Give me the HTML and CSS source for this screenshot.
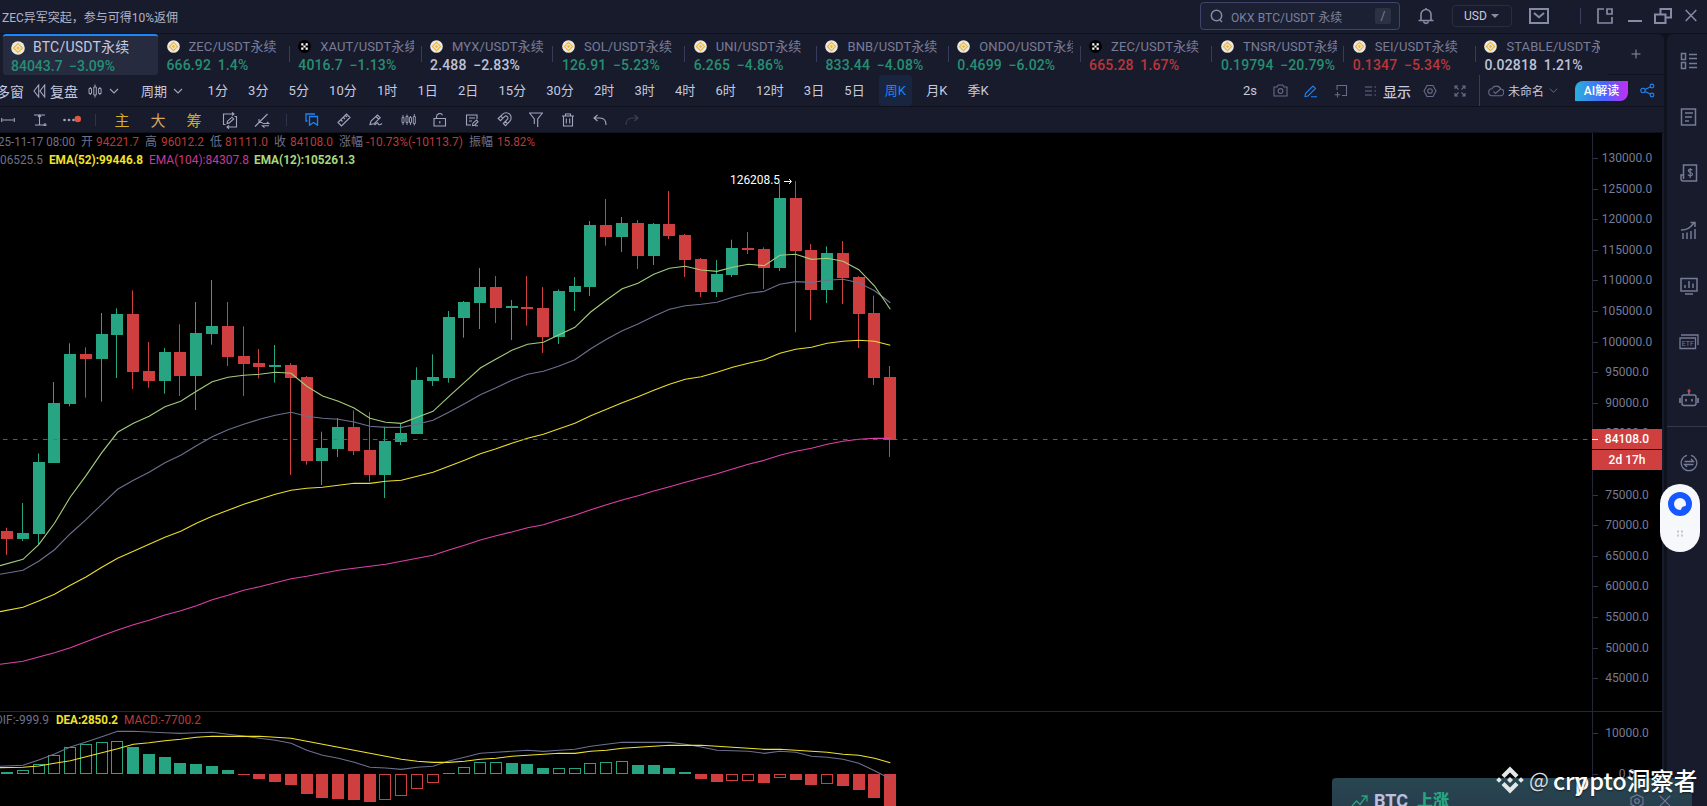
FILE: index.html
```html
<!DOCTYPE html>
<html lang="zh-CN">
<head>
<meta charset="utf-8">
<title>BTC/USDT永续</title>
<link rel="stylesheet" href="styles.css">
</head>
<body>
<svg class="defs" width="0" height="0">
  <symbol id="bn" viewBox="0 0 14 14"><circle cx="7" cy="7" r="6.8" fill="#ece9e4"/><path d="M7 2.600L11.400 7 7 11.400 2.600 7z" fill="none" stroke="#edb83a" stroke-width="1.300"/><path d="M7 5.200L8.800 7 7 8.800 5.200 7z" fill="#edb83a"/></symbol>
  <symbol id="okx" viewBox="0 0 14 14"><circle cx="7" cy="7" r="7" fill="#000"/><path d="M3.500 3.500h2.300v2.300H3.500zM8.200 3.500h2.300v2.300H8.200zM5.850 5.850h2.300v2.300h-2.300zM3.500 8.200h2.300v2.300H3.500zM8.200 8.200h2.300v2.300H8.200z" fill="#fff"/></symbol>
  <symbol id="chev" viewBox="0 0 10 10"><path d="M1 3l4 4 4-4"/></symbol>
</svg>
<div class="app">
  <header class="titlebar">
    <div class="notice">ZEC异军突起，参与可得10%返佣</div>
    <div class="search">
      <svg class="ic" width="14" height="14" viewBox="0 0 14 14"><circle cx="6.500" cy="6.500" r="5.200" stroke-width="1.500"/><path d="M10 11l2 2" stroke-width="1.500"/></svg>
      <span>OKX BTC/USDT 永续</span><kbd>/</kbd>
    </div>
    <svg class="ic bell" width="18" height="18" viewBox="0 0 18 18"><path d="M4 13V7.500a5 5 0 0 1 10 0V13M1.500 13.500h15M6.500 14.500a2.600 2.600 0 0 0 5 0M9 2.500V1" stroke-width="1.600"/></svg>
    <div class="usd">USD<i></i></div>
    <svg class="ic mail" width="20" height="16" viewBox="0 0 20 16"><path d="M1 1h18v14H1zM5 5l5 4.200 5-4.200" stroke-width="2"/></svg>
    <i class="tsep"></i>
    <svg class="ic t1" width="17" height="16" viewBox="0 0 17 16"><path d="M7 1H1v14h14V9M10 1h5v5h-5z" stroke-width="1.700"/></svg>
    <svg class="ic t2" width="14" height="16" viewBox="0 0 14 16"><path d="M0 13h14" stroke-width="2"/></svg>
    <svg class="ic t3" width="18" height="16" viewBox="0 0 18 16"><path d="M1 6.500h10.500V15H1zM6.500 6V1H17v8.500h-5" stroke-width="2"/></svg>
    <svg class="ic t4" width="12" height="13" viewBox="0 0 12 13"><path d="M.7 1l10.600 11M11.300 1L.7 12" stroke-width="1.500"/></svg>
  </header>
  <div class="body">
    <main class="main">
      <nav class="tabs">
        <div class="tab on"><div class="nm"><svg><use href="#bn"/></svg><span>BTC/USDT永续</span></div><b class="g">84043.7 −3.09%</b></div>
        <div class="tab"><div class="nm"><svg><use href="#bn"/></svg><span>ZEC/USDT永续</span></div><b class="g">666.92 1.4%</b></div>
        <div class="tab"><div class="nm"><svg><use href="#okx"/></svg><span>XAUT/USDT永续</span></div><b class="g">4016.7 −1.13%</b></div>
        <div class="tab"><div class="nm"><svg><use href="#bn"/></svg><span>MYX/USDT永续</span></div><b class="w">2.488 −2.83%</b></div>
        <div class="tab"><div class="nm"><svg><use href="#bn"/></svg><span>SOL/USDT永续</span></div><b class="g">126.91 −5.23%</b></div>
        <div class="tab"><div class="nm"><svg><use href="#bn"/></svg><span>UNI/USDT永续</span></div><b class="g">6.265 −4.86%</b></div>
        <div class="tab"><div class="nm"><svg><use href="#bn"/></svg><span>BNB/USDT永续</span></div><b class="g">833.44 −4.08%</b></div>
        <div class="tab"><div class="nm"><svg><use href="#bn"/></svg><span>ONDO/USDT永续</span></div><b class="g">0.4699 −6.02%</b></div>
        <div class="tab"><div class="nm"><svg><use href="#okx"/></svg><span>ZEC/USDT永续</span></div><b class="r">665.28 1.67%</b></div>
        <div class="tab"><div class="nm"><svg><use href="#bn"/></svg><span>TNSR/USDT永续</span></div><b class="g">0.19794 −20.79%</b></div>
        <div class="tab"><div class="nm"><svg><use href="#bn"/></svg><span>SEI/USDT永续</span></div><b class="r">0.1347 −5.34%</b></div>
        <div class="tab last"><div class="nm"><svg><use href="#bn"/></svg><span>STABLE/USDT永续</span></div><b class="w">0.02818 1.21%</b></div>
        <div class="add"><svg class="ic" width="10" height="10" viewBox="0 0 10 10"><path d="M5 .5v9M.5 5h9" stroke-width="1"/></svg></div>
      </nav>
      <div class="periods">
        <div class="pleft">
          <span class="big">多窗</span>
          <svg class="ic lt rw" width="13" height="14" viewBox="0 0 13 14"><path d="M5.700 1v12L1 7zM11.700 1v12L7 7z" stroke-width="1.100"/></svg>
          <span class="big">复盘</span>
          <svg class="ic lt cd" width="14" height="14" viewBox="0 0 14 14"><path d="M1 4.500h2.500v5H1zM5.800 3h2.500v8H5.800zM10.600 4.500h2.500v5h-2.500zM2.300 3v1.500M2.300 9.500V11M7 .5V3M7 11v2.500M11.900 3v1.500M11.900 9.500V11" stroke-width="1"/></svg>
          <svg class="ic lt cv" width="10" height="10"><use href="#chev"/></svg>
          <span class="zq">周期</span>
          <svg class="ic lt cv2" width="10" height="10"><use href="#chev"/></svg>
        </div>
        <ul class="plist"><li>1分</li><li>3分</li><li>5分</li><li>10分</li><li>1时</li><li>1日</li><li>2日</li><li>15分</li><li>30分</li><li>2时</li><li>3时</li><li>4时</li><li>6时</li><li>12时</li><li>3日</li><li>5日</li><li class="cur">周K</li><li>月K</li><li>季K</li></ul>
        <div class="pright">
          <span class="cell">2s</span>
          <span class="cell"><svg class="ic" width="15" height="13" viewBox="0 0 15 13"><path d="M1 3h3l1.200-2h4.600L11 3h3v9H1z"/><circle cx="7.500" cy="7" r="2.400"/></svg></span>
          <span class="cell"><svg class="ic blue" width="14" height="14" viewBox="0 0 14 14"><path d="M1.500 9.500L9 2l2.500 2.500L4 12l-3 .5zM7 12.800h6"/></svg></span>
          <span class="cell"><svg class="ic" width="14" height="14" viewBox="0 0 14 14"><path d="M3 6V1.500h9.500v10H8M3.500 8v5.500M.7 10.800h5.600"/></svg></span>
          <span class="cell"><svg class="ic" width="12" height="12" viewBox="0 0 12 12"><path d="M0 2h7M0 6h7M0 10h7M9.500 2H11M9.500 6H11M9.500 10H11"/></svg></span>
          <span class="show">显示</span>
          <span class="cell"><svg class="ic" width="14" height="14" viewBox="0 0 14 14"><path d="M4 1.500h6L13 7l-3 5.500H4L1 7z"/><circle cx="7" cy="7" r="2.300"/></svg></span>
          <span class="cell"><svg class="ic" width="12" height="12" viewBox="0 0 12 12"><path d="M1 4V1h3M8 1h3v3M11 8v3H8M4 11H1V8M1.500 1.500l3 3M10.500 1.500l-3 3M10.500 10.500l-3-3M1.500 10.500l3-3"/></svg></span>
          <i class="psep"></i>
          <svg class="ic" width="16" height="12" viewBox="0 0 16 12"><path d="M4.500 10.800a3.500 3.500 0 0 1-.5-7A4.800 4.800 0 0 1 12.700 4a3.400 3.400 0 0 1-.7 6.800zM5.500 6.500L7.500 8.500l5-4.500"/></svg>
          <span class="unnamed">未命名</span>
          <svg class="ic" width="9" height="9"><use href="#chev"/></svg>
          <span class="ai">AI解读</span>
          <svg class="ic blue" width="15" height="15" viewBox="0 0 15 15"><circle cx="3" cy="7.500" r="2.200"/><circle cx="12" cy="3" r="1.900"/><circle cx="12" cy="12" r="1.900"/><path d="M5 6.500l5.200-2.600M5 8.500l5.200 2.600"/></svg>
        </div>
      </div>
      <div class="tools">
        <span class="c"><svg class="ic lt" width="14" height="10" viewBox="0 0 14 10"><path d="M1.500 5h11M.7 3v4M13.300 3v4"/></svg></span>
        <span class="c"><svg class="ic lt" width="14" height="12" viewBox="0 0 14 12"><path d="M1 1h11M2 11h9M6.500 1v10M5 3l1.500-2L8 3"/><circle cx="12" cy="10.700" r="1"/></svg></span>
        <span class="c"><svg width="20" height="10" viewBox="0 0 20 10"><g fill="#a4a8bd"><circle cx="2.500" cy="5" r="1.300"/><circle cx="7" cy="5" r="1.300"/><circle cx="11.500" cy="5" r="1.300"/></g><circle cx="15.800" cy="4" r="3.200" fill="#e2553e"/></svg></span>
        <i class="s s1"></i>
        <span class="c w k1">主</span><span class="c w k2">大</span><span class="c w k1">筹</span>
        <span class="c w"><svg class="ic lt" width="16" height="17" viewBox="0 0 16 17"><path d="M3.500 12.500H1.500V2H12M10 .5L12 2l-2 1.700M12.500 4.500h2V15H5M7 13.300L5 15l2 1.700M5 11.500l.5-2.300L10 5.200l1.700 1.700-4.500 4z"/></svg></span>
        <span class="c n"><svg class="ic lt" width="16" height="15" viewBox="0 0 16 15"><path d="M1 13.500L13.500 1M5 6v3.500h3.500M8.500 10.500h6.500L13 8.800M15 12.800H8.500l2 1.700"/></svg></span>
        <i class="s s2"></i>
        <span class="c"><svg class="ic blue" width="14" height="13" viewBox="0 0 14 13"><path d="M2.500 8H1V1h9M4.500 3.500h8v8.700l-4-2.700-4 2.700z" stroke-width="1.300"/></svg></span>
        <span class="c"><svg class="ic lt" width="14" height="14" viewBox="0 0 14 14"><path d="M1 9.500L9.500 1 13 4.500 4.500 13zM4 7l1.500 1.500M6.500 4.500L8 6M8.500 2.500L10 4"/></svg></span>
        <span class="c"><svg class="ic lt" width="14" height="14" viewBox="0 0 14 14"><path d="M1 11.500l1-3.500L8.500 2l2.700 2.700L5 10.800zM7 3.500l2.700 2.700M5.500 12c2-2 3-3 3.500-1.500s1.500 2 4 0"/></svg></span>
        <span class="c"><svg class="ic lt" width="15" height="14" viewBox="0 0 15 14"><path d="M1 4.500h2v5H1zM5 3.500h2v6H5zM8.500 4.500h2v5h-2zM12.300 3.500h2v7h-2zM2 2v2.500M2 9.500V12M6 1.500v2M6 9.500v2.500M9.500 3v1.500M9.500 9.500V12M13.300 1v2.500M13.300 10.500v2" stroke-width=".9"/></svg></span>
        <span class="c"><svg class="ic lt" width="14" height="14" viewBox="0 0 14 14"><path d="M1 5.500h11.500V13H1zM3.500 5V3.500a3.200 3.200 0 0 1 6-1.300M6.800 8v2.500"/></svg></span>
        <span class="c"><svg class="ic lt" width="14" height="14" viewBox="0 0 14 14"><path d="M6 12H1.500V2H12v4M4 5h6M4 8h3M7.500 12.500l.5-2.300L11.500 7 13 8.700l-3.500 3.500zM10 12.800h3"/></svg></span>
        <span class="c"><svg class="ic lt" width="15" height="15" viewBox="0 0 15 15"><path d="M1.200 6.500L5.500 2.300a5 5 0 0 1 7.200 7L8.500 13.700 6.300 11.500l4.200-4.300a2 2 0 0 0-2.800-2.800L3.500 8.700zM3.700 4.200l2.200 2.200M8.300 9.400l2.200 2.200"/></svg></span>
        <span class="c"><svg class="ic lt" width="16" height="15" viewBox="0 0 16 15"><path d="M1 1h14M1.500 1L6.300 7v5M14.500 1L9.700 7v8"/></svg></span>
        <span class="c"><svg class="ic lt" width="14" height="14" viewBox="0 0 14 14"><path d="M1 3h12M4.500 3V1h5v2M2.500 3v10h9V3M5.300 5.500v5M8.700 5.500v5"/></svg></span>
        <span class="c"><svg class="ic lt" width="14" height="12" viewBox="0 0 14 12"><path d="M4.500 1L1 4l3.500 3M1 4h6c4 0 6 3 6 7"/></svg></span>
        <span class="c"><svg class="ic dim" width="14" height="12" viewBox="0 0 14 12"><path d="M9.500 1L13 4 9.500 7M13 4H7C3 4 1 7 1 11"/></svg></span>
      </div>
      <svg class="chart" id="chart" width="1662" height="673" viewBox="0 133 1662 673"></svg>
    </main>
    <aside class="side">
      <svg class="ic" width="18" height="18" viewBox="0 0 18 18"><path d="M1.500 1.500h4v6h-4zM1.500 10.500h4v6h-4zM9 2.500h8M9 6.500h8M9 11.500h8M9 15.500h8" stroke-width="1.500"/></svg>
      <svg class="ic" width="18" height="18" viewBox="0 0 18 18"><path d="M1.500 1h14v16h-14zM5 5h8M5 9h7M5 13h4" stroke-width="1.500"/></svg>
      <svg class="ic" width="18" height="18" viewBox="0 0 18 18"><path d="M3.500 11V1h13v16H2.500A2 2 0 0 1 1 15v-4h2.500v4" stroke-width="1.500"/><path d="M12.300 6.300c-.5-1.300-4-1.500-4 .5s4.200 1.400 4.200 3.500-3.800 2-4.500.2M10.200 4v10" stroke-width="1.200"/></svg>
      <svg class="ic" width="18" height="18" viewBox="0 0 18 18"><path d="M3 12v6M7 11.500V18M11 10v8M15 8v10M1 9c6 0 9-2 13-7M10.500 1.500H15V6" stroke-width="1.500"/></svg>
      <svg class="ic" width="18" height="18" viewBox="0 0 18 18"><path d="M1 1.500h16v12.500H1zM5 11V8M9 11V4M13 11V6.500M5 17h8" stroke-width="1.500"/></svg>
      <svg class="ic" width="20" height="18" viewBox="0 0 20 18"><path d="M2 2h17v10M1 5h15.500v10.500H1z" stroke-width="1.300"/><text x="2.800" y="13">ETF</text></svg>
      <svg class="ic" width="20" height="18" viewBox="0 0 20 18"><rect x="3" y="6" width="14" height="10.500" rx="2" stroke-width="1.500"/><path d="M1 9v5M19 9v5M7 10v2.500M13 10v2.500" stroke-width="1.700"/><path d="M10 5.500V3" stroke-width="1.500"/><circle cx="10" cy="1.800" r="1" fill="#e0403c" stroke="#e0403c"/></svg>
      <i class="rule"></i>
      <svg class="ic" width="18" height="18" viewBox="0 0 18 18"><path d="M7 1.300a7.800 7.800 0 1 0 4 0M4.500 7.500h9L11 5M13.500 10.500h-9L7 13" stroke-width="1.300"/></svg>
    </aside>
  </div>
  <div class="pill"><svg width="40" height="68" viewBox="0 0 40 68"><circle cx="20" cy="20" r="9" fill="none" stroke="#1558ff" stroke-width="6"/><path d="M21 26.500c0-3 1.500-4.500 5.500-4.500v3l-3 2.500z" fill="#1558ff"/><path d="M17 46.500h2v2h-2zM21 46.500h2v2h-2zM17 50.500h2v2h-2zM21 50.500h2v2h-2z" fill="#c3c6cf"/></svg></div>
  <div class="toast">
    <svg class="up" width="17" height="12" viewBox="0 0 17 12"><path d="M1 11l4.500-5 3.500 3.500L15.500 1M10.500 1H16v5.500" fill="none" stroke="#27a583" stroke-width="1.300"/></svg>
    <b>BTC</b><b class="rise">上涨</b>
    <svg class="ic hx" width="14" height="14" viewBox="0 0 14 14"><path d="M7 .7l6 3v6.600l-6 3-6-3V3.700z"/><circle cx="7" cy="7" r="2.300"/></svg>
    <svg class="ic" width="12" height="12" viewBox="0 0 12 12"><path d="M.7.7l10.600 10.600M11.300.7L.7 11.300"/></svg>
  </div>
  <div class="mark">
    <svg width="28" height="28" viewBox="0 0 28 28" fill="#e4e6e8"><path d="M14 .5l8.500 8.500-3 3L14 6.500 8.500 12l-3-3zM14 27.500L5.500 19l3-3 5.500 5.500 5.500-5.500 3 3zM14 11l3 3-3 3-3-3zM3 11.200L5.800 14 3 16.800.2 14zM25 11.200l2.800 2.800-2.800 2.800-2.800-2.800z"/></svg>
    <span class="at">@</span><span class="who">cr<span class="pp">p<i>y</i></span>pto洞察者</span>
  </div>
</div>
<script src="chart.js"></script>
</body>
</html>
```
FILE: styles.css
```css
* { box-sizing: border-box; }
body {
  margin: 0; background: #181b2c; overflow: hidden; color: #c6cadf;
  font-family: Roboto, "Noto Sans CJK SC", sans-serif;
}
ul { margin: 0; padding: 0; list-style: none; }
svg { flex: none; display: block; }
.defs { position: absolute; }
.app { width: 1707px; height: 806px; display: flex; flex-direction: column; overflow: hidden; position: relative; }
.ic { fill: none; stroke: #666b87; stroke-width: 1.1; }
.ic.lt { stroke: #a2a6bc; }
.ic.blue { stroke: #1a86f8; }
.ic.dim { stroke: #3c4055; }

.titlebar { height: 34px; flex: none; display: flex; align-items: center; padding-bottom: 2px; border-bottom: 1px solid #0f121d; }
.titlebar .ic { stroke: #868ba6; }
.notice { width: 1200px; padding: 1px 0 0 2px; font-size: 12px; color: #b0b4ca; }
.search { width: 200px; height: 28px; border: 1px solid #40446a; border-radius: 4px; background: #1b2033; display: flex; align-items: center; padding: 0 8px 0 9px; font-size: 12px; color: #7c819f; }
.search span { margin: 2px 0 0 7px; flex: 1; white-space: nowrap; letter-spacing: .1px; }
.search kbd { width: 16px; height: 16px; background: #2d3144; border-radius: 2px; font: 12px/16px Roboto, sans-serif; text-align: center; }
.bell { margin-left: 17px; }
.usd { margin-left: 17px; width: 60px; height: 22px; border: 1px solid #292d40; border-radius: 4px; display: flex; align-items: center; gap: 4px; padding: 1px 0 0 11px; font-size: 12px; }
.usd i { border: 4px solid transparent; border-top-color: #868ba6; border-bottom: 0; }
.mail { margin-left: 17px; }
.tsep { width: 1px; height: 16px; background: #3d4160; margin: 0 16px 0 31px; }
.t2 { margin-left: 14px; }
.t3 { margin-left: 12px; }
.t4 { margin-left: 13px; }

.body { flex: 1; display: flex; background: #0f121d; min-height: 0; }
.main { width: 1664px; flex: none; background: #181b2c; border-top-right-radius: 6px; }
.tabs { height: 41px; display: flex; padding-left: 3px; }
.tab { width: 131.8px; flex: none; padding: 4px 0 0 8.500px; position: relative; }
.tab:not(.last)::after { content: ""; position: absolute; right: 0; top: 12px; width: 1px; height: 16px; background: #383b60; }
.tab.on { width: 155px; background: #262b40; border-top: 2px solid #1a86f8; border-radius: 3px; padding: 3px 0 0 8px; }
.tab.on::after { display: none; }
.nm { display: flex; align-items: center; height: 17px; width: 116px; overflow: hidden; font-size: 13px; line-height: 17px; color: #787d99; }
.nm svg { width: 13px; height: 13px; margin-right: 9px; }
.nm span { white-space: nowrap; overflow: hidden; letter-spacing: .08px; }
.on .nm { font-size: 14px; color: #c4c8dd; width: 140px; }
.on .nm span { letter-spacing: .2px; }
.tab b { display: block; font-weight: 500; font-size: 14px; line-height: 21px; white-space: nowrap; word-spacing: 3px; letter-spacing: .15px; }
.tab.on b { line-height: 20px; letter-spacing: 0; }
.on .nm svg { width: 14px; height: 14px; margin-right: 8px; }
.g { color: #258f73; } .r { color: #bb3639; } .w { color: #bfc3d8; }
.add { flex: 1; display: flex; align-items: center; justify-content: center; border-bottom: 1px solid #0f121d; padding: 0 0 0 1px; }
.add .ic { stroke: #8c91aa; }

.periods { height: 32px; display: flex; align-items: center; border-bottom: 1px solid #0f121d; font-size: 13px; }
.pleft { width: 202px; display: flex; align-items: center; white-space: nowrap; }
.big { font-size: 14px; }
.pleft > .big:first-child { margin-left: -4px; }
.rw { margin: 0 4px 0 9px; }
.cd { margin-left: 10px; }
.cv { margin-left: 7px; }
.zq { margin-left: 22px; }
.cv2 { margin-left: 6px; }
.plist { display: flex; height: 31px; line-height: 31px; margin-left: -4.500px; white-space: nowrap; }
.plist li { padding: 0 6px; margin: 0 4.100px; }
.plist .cur { background: #182440; color: #1a86f8; border-radius: 3px; }
.pright { margin-left: auto; display: flex; align-items: center; height: 31px; padding-right: 9px; white-space: nowrap; }
.cell { width: 30px; display: flex; justify-content: center; }
.cell:first-child { padding-right: 2px; }
.show { font-size: 14px; font-weight: 500; margin: 0 4px 0 -3px; }
.psep { width: 1px; height: 31px; background: #383b60; margin: 0 8px 0 4px; }
.unnamed { font-size: 12px; margin: 0 5px 0 4px; }
.ai { width: 53px; height: 20px; margin: 0 12px 0 17px; border-radius: 8px 0 8px 0; background: linear-gradient(90deg, #2ab0dc, #4766ff 55%, #c42df5); color: #fff; font-size: 12px; font-weight: 500; line-height: 21px; text-align: center; }

.tools { height: 26px; display: flex; align-items: center; border-bottom: 1px solid #0f121d; }
.tools .c { width: 32px; display: flex; align-items: center; justify-content: center; flex: none; }
.tools .c:first-child { margin-left: -8px; }
.tools .c.w { width: 36px; color: #d9b01f; font-size: 15px; line-height: 24px; padding-top: 2px; }
.tools .c.k2 { color: #d7a560; }
.tools .c.n { width: 28px; padding-top: 2px; }
.s { width: 1px; height: 12px; background: #2f3349; flex: none; }
.s1 { margin: 0 8px 0 7px; }
.s2 { margin: 0 9.500px; }
.chart { background: #000; }
.chart text { font: 12px Roboto, "Noto Sans CJK SC", sans-serif; }
.chart .b { font-weight: 700; }
.chart .m { font-weight: 500; }

.side { width: 40px; margin-left: 3px; background: #181b2c; border-top-left-radius: 6px; display: flex; flex-direction: column; align-items: center; gap: 38.200px; padding: 18px 0 0 4px; }
.side .ic { stroke: #767b98; }
.side text { font: 7px Roboto, sans-serif; fill: #767b98; stroke: none; }
.side .rule { width: 40px; height: 1px; background: #34384d; margin: -19.500px 0 -11px -4px; flex: none; }

.pill { position: absolute; left: 1660px; top: 484px; width: 40px; height: 68px; border-radius: 20px; background: #f7f8fb; }
.toast { position: absolute; left: 1332px; top: 778px; width: 360px; height: 50px; border-radius: 4px; background: linear-gradient(#274650, #27394b); display: flex; align-items: flex-start; padding: 12px 21px 0 19px; line-height: 22px; font-size: 18px; color: #bcbfe0; }
.toast .up { margin: 5px 6px 0 0; }
.toast .rise { color: #27a583; margin-left: 9px; font-size: 16px; font-weight: 900; }
.toast .hx { margin: 4px 15px 0 auto; }
.toast .ic { stroke: #77799c; }
.toast .ic:last-child { margin-top: 5px; }
.mark { position: absolute; left: 1496px; top: 762px; height: 36px; display: flex; align-items: center; color: #fff; font: 500 23.600px/36px "Noto Sans CJK SC", sans-serif; text-shadow: 0 1px 2px rgba(0, 0, 0, .5); white-space: nowrap; }
.at { margin: -2px 4px 0 5px; color: #d8dbe0; font-weight: 400; font-size: 21px; }
.who { letter-spacing: -.1px; }
.pp { position: relative; }
.pp i { position: absolute; left: 0; top: 0; font-style: normal; line-height: 34px; }
```
FILE: chart.js
```js
// Each candle: up flag, body top, body bottom, high, low (y in thirds of a pixel below y=170)
const candles = [
[0,1083,1107,1073,1155],[1,1089,1107,999,1113],[1,876,1092,850,1124],[1,699,879,636,879],[1,552,702,520,709],
[0,552,567,532,683],[1,492,567,429,695],[1,432,495,415,624],[0,432,606,361,657],[0,603,633,516,653],
[1,546,633,534,671],[0,546,618,463,678],[1,489,618,396,720],[1,468,492,330,524],[0,468,561,396,588],
[0,558,582,469,678],[0,579,591,537,625],[1,585,591,525,638],[0,585,624,579,915],[0,621,873,618,884],
[1,834,873,785,945],[1,771,837,744,861],[0,771,843,721,855],[0,840,915,726,935],[1,813,915,770,984],
[1,789,816,762,825],[1,630,792,592,792],[1,621,633,553,648],[1,441,624,423,638],[1,396,444,393,503],
[1,351,399,294,477],[0,351,414,318,459],[1,408,414,390,510],[0,411,417,318,467],[0,414,501,351,549],
[1,363,501,358,522],[1,348,366,321,423],[1,165,351,153,378],[0,165,201,87,227],[1,159,201,141,246],
[0,159,258,150,297],[1,162,258,159,285],[0,162,198,63,207],[0,195,270,192,321],[0,267,366,264,381],
[1,312,366,270,381],[1,234,315,209,321],[0,234,240,186,252],[0,237,294,232,357],[1,84,294,40,303],
[0,84,243,33,487],[0,240,360,222,450],[1,249,360,229,399],[0,249,324,213,402],[0,321,432,318,534],
[0,429,624,377,645],[0,621,809,588,861]];
// Moving averages, one value per candle, first value at the left edge of the plot
const ema12 = [1187,1168,1124,1060,981,917,848,787,760,739,710,694,664,635,622,616,613,607,610,649,678,694,714,745,757,760,742,724,680,637,594,567,541,523,517,494,472,426,390,356,340,313,295,289,300,304,292,283,287,256,253,268,265,274,299,348,418];
const ema24 = [1213,1201,1174,1139,1091,1049,1003,958,931,907,878,856,827,800,779,763,748,736,727,739,745,748,756,769,772,772,763,751,727,701,674,653,631,613,604,588,569,536,508,482,462,439,418,407,403,397,382,370,364,343,335,337,331,328,338,362,398];
const ema52 = [1325,1312,1293,1273,1246,1221,1192,1165,1144,1123,1102,1084,1060,1039,1021,1003,988,973,961,955,952,946,940,940,934,931,919,907,889,871,851,836,820,805,793,776,760,737,718,698,680,661,643,628,620,607,592,580,569,550,538,532,520,514,511,514,526];
const ema104 = [1483,1474,1461,1448,1433,1415,1397,1380,1364,1351,1335,1322,1307,1289,1276,1261,1250,1238,1226,1219,1210,1201,1195,1189,1183,1174,1165,1156,1140,1126,1110,1097,1086,1073,1064,1049,1036,1019,1004,990,977,963,950,937,924,911,897,883,871,856,844,835,823,814,808,805,805];
// MACD histogram: end of bar relative to y=700 in thirds, hollow flag
const bars = [[216,0],[210,1],[192,1],[165,1],[141,1],[132,1],[126,1],[123,1],[141,0],[162,0],[171,0],[189,0],[192,0],[198,0],[210,0],[225,0],[237,0],[246,0],[255,0],[282,0],[294,0],[297,0],[300,0],[306,0],[300,1],[288,1],[267,1],[249,1],[219,0],[201,1],[186,1],[186,1],[189,0],[192,0],[204,0],[204,1],[204,1],[189,1],[186,1],[183,1],[195,0],[195,0],[204,0],[216,0],[237,0],[246,0],[243,1],[243,1],[249,0],[234,1],[240,0],[255,0],[252,1],[258,0],[270,0],[294,0],[330,0]];
const dif = [199,196,180,162,141,126,110,94,94,96,98,100,98,97,103,108,115,121,130,151,166,175,187,202,204,208,202,199,183,172,160,157,154,151,154,151,148,139,133,127,127,127,127,133,141,151,152,154,160,154,157,169,172,178,190,212,236];
const dea = [203,202,198,190,182,170,158,146,133,128,122,118,112,109,109,109,109,112,115,124,133,142,151,160,169,178,184,187,187,184,178,175,169,166,163,160,160,154,151,145,142,139,136,136,136,139,142,145,148,148,151,154,157,163,166,175,188];

const GREEN = '#27a583', RED = '#cf3f3f';
const cx = i => 6.5 + i * 15.77;
const out = [];
const rect = (x, y, w, h, fill) => out.push(`<rect x="${x}" y="${y}" width="${w}" height="${h}" fill="${fill}"/>`);
const text = (x, y, s, fill, cls = '', len = 0, anchor = 'start') =>
  out.push(`<text x="${x}" y="${y}" fill="${fill}" class="${cls}" text-anchor="${anchor}"${len ? ` textLength="${len}" lengthAdjust="spacingAndGlyphs"` : ''}>${s}</text>`);

// The 85000 label sits partly behind the current price tag
for (let k = 0; k < 18; k++) {
  const y = 158 + k * 30.6;
  if (k !== 9) rect(1593, Math.round(y), 5, 1, '#30354c');
  text(1627, Math.round(y) + 4, (130000 - k * 5000) + '.0', '#767b99', '', 0, 'middle');
}
candles.forEach(([up, top, bottom, high, low], i) => {
  const c = up ? GREEN : RED, x = Math.round(cx(i) - 0.5);
  rect(x, 170 + high / 3, 1, (low - high) / 3, c);
  rect(x - 5, Math.round(170 + top / 3), 12, Math.round((bottom - top) / 3), c);
});
bars.forEach(([v, hollow], i) => {
  const x = Math.round(cx(i) - 0.5) - 5, up = v < 221, c = up ? GREEN : RED;
  const y = up ? Math.round(700 + v / 3) : 774, h = up ? 774 - y : Math.round(700 + v / 3) - 774;
  if (hollow) out.push(`<rect x="${x + .5}" y="${y + .5}" width="11" height="${h - 1}" fill="none" stroke="${c}"/>`);
  else rect(x, y, 12, h, c);
});
const line = (vals, base, c) => {
  const p = vals.map((v, i) => `${i ? (cx(i) + .7).toFixed(1) : 0},${(base + v / 3).toFixed(1)}`).join(' ');
  out.push(`<polyline points="${p}" fill="none" stroke="${c}" stroke-width="1.15"/>`);
};
line(ema104, 170, '#de40a9');
line(ema52, 170, '#eadc2c');
line(ema24, 170, '#6b708f');
line(ema12, 170, '#a3cc7a');
line(dif, 700, '#6b708f');
line(dea, 700, '#f0e22c');

out.push(`<path d="M3 439.500H1592" stroke="#cf3f3f" stroke-dasharray="4.500 5.500" opacity=".85"/>`);
rect(0, 711, 1662, 1, '#222638');
rect(1592, 133, 1, 673, '#222638');
rect(1662, 133, 2, 673, '#181b2c');
rect(1593, 733, 5, 1, '#30354c');
rect(1593, 774, 5, 1, '#30354c');
text(1627, 737, '10000.0', '#767b99', '', 0, 'middle');
text(1627, 778, '0.0', '#767b99', '', 0, 'middle');
rect(1592, 429, 70, 20, '#cf3f3f');
rect(1592, 449, 70, 1, '#000');
rect(1592, 450, 70, 20, '#cf3f3f');
rect(1592, 439, 6, 1, '#fff');
text(1627, 443, '84108.0', '#fff', 'm', 0, 'middle');
text(1627, 464, '2d 17h', '#fff', 'm', 0, 'middle');
text(730, 184, '126208.5', '#fff', '', 50);
out.push('<path d="M784 181.500h7M789 179l2.500 2.500-2.500 2.500" fill="none" stroke="#fff"/>');

const G = '#6d728f', R = '#b93a3a';
[[-2,'25-11-17 08:00',G,77],[81,'开',G,12],[96,'94221.7',R,43],[145,'高',G,12],[161,'96012.2',R,43],[210,'低',G,12],[225,'81111.0',R,43],
 [274,'收',G,12],[290,'84108.0',R,43],[339,'涨幅',G,24],[366,'-10.73%(-10113.7)',R,97],[469,'振幅',G,24],[497,'15.82%',R,38]]
  .forEach(([x, s, c, w]) => text(x, 146, s, c, '', w));
text(0, 164, '06525.5', G, '', 43);
text(49, 164, 'EMA(52):99446.8', '#f0e22c', 'b', 94);
text(149, 164, 'EMA(104):84307.8', '#c8389a', '', 100);
text(254, 164, 'EMA(12):105261.3', '#a9d67e', 'b', 101);
text(-5, 724, 'DIF:-999.9', G, '', 54);
text(56, 724, 'DEA:2850.2', '#f0e22c', 'b', 62);
text(124, 724, 'MACD:-7700.2', '#bb3a3c', '', 77);
document.getElementById('chart').innerHTML = out.join('');
```
